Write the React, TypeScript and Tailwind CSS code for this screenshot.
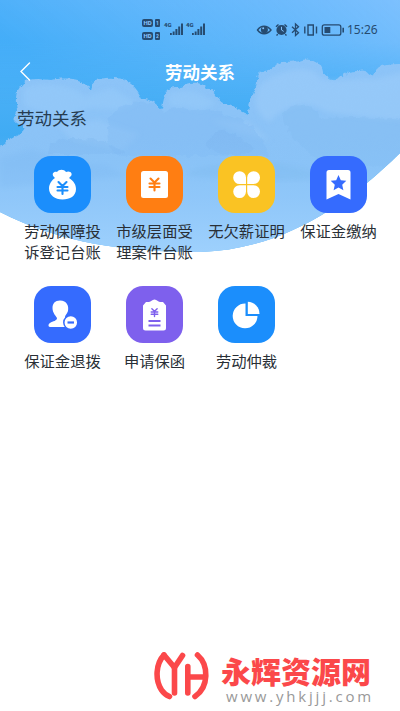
import type { ReactNode } from 'react';

const FONT = "font-['Noto_Sans_CJK_SC',sans-serif]";

function Sky() {
  return (
    <svg className="absolute left-0 top-0 h-[260px] w-[400px]" viewBox="0 0 400 260" aria-hidden="true">
      <defs>
        <linearGradient id="sky" x1="0" y1="0" x2="0" y2="1">
          <stop offset="0" stopColor="#61b7fc" />
          <stop offset="0.3" stopColor="#4db1f7" />
          <stop offset="0.6" stopColor="#3ba9f2" />
          <stop offset="1" stopColor="#53b4f7" />
        </linearGradient>
        <linearGradient id="glow" x1="0" y1="0.3" x2="1" y2="0">
          <stop offset="0" stopColor="#2fa6f7" stopOpacity="0.6" />
          <stop offset="0.45" stopColor="#66b8fc" stopOpacity="0.5" />
          <stop offset="1" stopColor="#8ac5ff" stopOpacity="0.9" />
        </linearGradient>
        <linearGradient id="fade" x1="0" y1="0" x2="0" y2="1">
          <stop offset="0" stopColor="white" />
          <stop offset="0.4" stopColor="white" />
          <stop offset="1" stopColor="black" />
        </linearGradient>
        <mask id="glowFade">
          <rect width="400" height="105" fill="url(#fade)" />
        </mask>
        <linearGradient id="cloud" x1="0" y1="0" x2="0" y2="1">
          <stop offset="0" stopColor="#8dc4f8" />
          <stop offset="0.5" stopColor="#8ac2f6" />
          <stop offset="1" stopColor="#9dcffb" />
        </linearGradient>
        <linearGradient id="haze" x1="0" y1="0" x2="0" y2="1">
          <stop offset="0" stopColor="#86c3f8" stopOpacity="0" />
          <stop offset="0.5" stopColor="#8fc7fa" stopOpacity="0.7" />
          <stop offset="1" stopColor="#a0d2fd" />
        </linearGradient>
        <clipPath id="bowl">
          <path d="M0 0H400V153C340 212 275 250 200 252C125 252 60 243 0 212Z" />
        </clipPath>
        <filter id="soft" x="-10%" y="-10%" width="120%" height="120%" colorInterpolationFilters="sRGB">
          <feGaussianBlur stdDeviation="2.5" />
        </filter>
        <filter id="ragged" colorInterpolationFilters="sRGB">
          <feTurbulence type="fractalNoise" baseFrequency="0.14" numOctaves="3" seed="4" />
          <feDisplacementMap in="SourceGraphic" scale="6" xChannelSelector="R" yChannelSelector="G" />
          <feGaussianBlur stdDeviation="0.4" />
        </filter>
      </defs>
      <g clipPath="url(#bowl)">
        <rect width="400" height="260" fill="url(#sky)" />
        <rect width="400" height="105" fill="url(#glow)" opacity="0.75" mask="url(#glowFade)" />
        <g filter="url(#ragged)">
          <path fill="url(#cloud)" d="M-10 156C2 144 8 140 20 134C25 131 27 127 24 126C16 124 12 122 14 116C20 113 15 107 16 100C16 91 19 88 24 82C34 77 44 80 52 80C64 77 80 79 84 83C88 84 88 89 90 90C91 80 104 77 112 78C127 77 137 87 142 99C151 98 158 106 162 109C164 93 168 87 178 88C187 81 202 81 208 88C218 93 218 101 223 103C235 104 240 112 248 114C249 98 255 94 257 82C256 71 268 72 274 67C281 59 290 63 299 61C310 57 322 62 323 72C331 77 326 81 338 80C342 76 346 71 358 71C369 68 369 77 373 74C378 64 389 64 410 64V270H-10Z" />
        </g>
        <g filter="url(#soft)">
          <path fill="#a3d0fb" opacity="0.42" d="M259 86C275 70 314 62 320 78C330 83 350 78 374 79L405 72V120C370 119 350 115 326 112C304 97 281 108 270 122C255 115 253 99 259 86Z" />
          <path fill="#a0cffb" opacity="0.32" d="M24 88C40 81 75 84 84 96L112 88L137 103L121 110L91 108L60 118L24 106ZM168 94C179 90 195 88 208 98L217 104L202 110L170 106Z" />
          <path fill="#9dcdfb" opacity="0.4" d="M58 126L98 120L140 134L122 151L73 141ZM210 120L248 121L271 141L237 132Z" />
        </g>
        <g filter="url(#ragged)">
          <path fill="#7db9f2" opacity="0.32" d="M107 128C109 108 126 101 142 103C154 102 158 107 164 112C180 103 190 112 201 110C218 107 224 114 232 118C242 114 252 127 262 140L270 156H120C107 151 108 139 107 128Z" />
          <path fill="#74b1ec" opacity="0.24" d="M205 145C213 127 230 128 238 137L254 148C238 159 220 156 205 145ZM50 145C64 135 79 141 94 139C108 143 118 145 125 154H48Z" />
          <path fill="#7bb7ef" opacity="0.22" d="M282 118C285 101 312 99 322 118L356 117L410 120V166H323C308 148 289 140 282 118Z" />
        </g>
        <path fill="url(#haze)" d="M0 135H400V260H0Z" />
        <path filter="url(#soft)" fill="#76b5e9" opacity="0.25" d="M185 175C205 161 235 166 260 162C282 163 300 169 322 173L310 179C270 182 220 180 185 175Z" />
        <path filter="url(#soft)" fill="#6faeed" opacity="0.16" d="M0 158L32 149L67 162L105 165L128 176L0 188Z" />
      </g>
    </svg>
  );
}

function Signal() {
  return (
    <span className="relative block h-4 w-[22px]">
      <span className="absolute left-0 top-0 font-['Roboto',sans-serif] text-[6px] font-black leading-[7px]">4G</span>
      <svg className="absolute bottom-0 left-[6px]" width="14" height="15" viewBox="0 0 14 15">
        <path fill="currentColor" d="M0 11h1.8v2H0zM2.7 9.5h1.9V13H2.7zM5.4 7h2v6h-2zM8.2 4.5h2V13h-2zM11 1.5h2V13h-2z" />
      </svg>
    </span>
  );
}

function HdTag({ sim }: { sim: string }) {
  return (
    <span className="flex h-2 gap-[2px]">
      <span className="flex w-[11px] items-center justify-center rounded-[2px] bg-[#264b70] font-['Roboto',sans-serif] text-[6px] font-bold leading-none text-[#8bc6fd]">HD</span>
      <span className="flex w-[5px] items-center justify-center rounded-[1px] bg-[#264b70] font-['Roboto',sans-serif] text-[5px] font-bold leading-none text-[#8bc6fd]">{sim}</span>
    </span>
  );
}

function StatusBar() {
  return (
    <div className="flex h-[48px] pl-[142px] pt-[19px] text-[#264b70]">
      <div className="flex w-[18px] flex-col gap-[5px]">
        <HdTag sim="1" />
        <HdTag sim="2" />
      </div>
      <div className="ml-[4px] mt-[2px] flex">
        <Signal />
        <Signal />
      </div>
      <svg className="ml-[46px] mt-[3px] shrink-0" width="91" height="16" viewBox="0 0 91 16" fill="none" stroke="currentColor" strokeWidth="1.4">
        <path d="M3.5 8C7 3 13 3 17 8C13 13 7 13 3.5 8Z" />
        <circle cx="10.4" cy="7.7" r="3.5" fill="currentColor" stroke="none" />
        <circle cx="9.2" cy="6.3" r="1" fill="#85c2fc" stroke="none" />
        <circle cx="27.5" cy="8" r="5.1" fill="currentColor" stroke="none" />
        <path d="M22 4.8L24.5 2.4M33 4.8L30.5 2.4M23.8 12.3L22.5 13.5M31.2 12.3L32.5 13.5" />
        <path stroke="#85c2fc" strokeWidth="1" d="M27.5 4.8V8L29.7 9.4" />
        <path strokeWidth="1.3" d="M38 4.7L44.5 10.8L41.5 13.5V2L44.5 4.7L38 10.8" />
        <path d="M54 3h5.3v10H54zM50.8 4.5v7M62.5 4.5v7" strokeWidth="1.4" />
        <rect x="68.3" y="2.9" width="18.5" height="10.3" rx="2" strokeWidth="1.3" />
        <rect x="70.5" y="5" width="5.8" height="6" fill="currentColor" stroke="none" />
        <path d="M89.2 5.7v4.7" strokeWidth="1.6" />
      </svg>
      <span className="ml-[2px] mt-[3px] text-[12px] leading-4 font-['Noto_Sans',sans-serif]">15:26</span>
    </div>
  );
}

function YenMark({ color }: { color: string }) {
  return <path d="M-4-5L0-1L4-5M-5 0H5M-5 3.5H5M0-1V7" fill="none" stroke={color} strokeWidth="2.1" strokeLinecap="round" />;
}

type Entry = { lines: string[]; tile: string; icon: ReactNode };

const entries: Entry[] = [
  {
    lines: ['劳动保障投', '诉登记台账'],
    tile: 'bg-[#1b8efc]',
    icon: (
      <>
        <path d="M20 21C17 18 20 15 23 16C25 13 30 13 32 16C36 14 40 18 36 21L35 22C40 25 42 29 42 33C42 40 36 43.5 28.5 43.5C21 43.5 15 39 15 32.5C15 28 18 24 21 22Z" />
        <g transform="translate(28.5 31)"><YenMark color="#1b8efc" /></g>
      </>
    ),
  },
  {
    lines: ['市级层面受', '理案件台账'],
    tile: 'bg-[#ff7e12]',
    icon: (
      <>
        <rect x="15" y="15" width="27" height="27" rx="2.5" />
        <g transform="translate(28.5 27.5)"><YenMark color="#ff7e12" /></g>
      </>
    ),
  },
  {
    lines: ['无欠薪证明'],
    tile: 'bg-[#fac323]',
    icon: (
      <>
        <path d="M28 28V21.5A6.4 6.4 0 1 0 21.6 28ZM29.2 28V21.5A6.4 6.4 0 1 1 35.6 28ZM28 29.2V35.6A6.4 6.4 0 1 1 21.6 29.2ZM29.2 29.2V35.6A6.4 6.4 0 1 0 35.6 29.2Z" />
      </>
    ),
  },
  {
    lines: ['保证金缴纳'],
    tile: 'bg-[#356bfe]',
    icon: (
      <>
        <path d="M19 14H38Q40.5 14 40.5 16.5V43.5L28.5 38L16.5 43.5V16.5Q16.5 14 19 14Z" />
        <path fill="#356bfe" d="M28.5 19L30.8 24.2L36.3 24.8L32.2 28.7L33.4 34.3L28.5 31.5L23.6 34.3L24.8 28.7L20.7 24.8L26.2 24.2Z" />
      </>
    ),
  },
  {
    lines: ['保证金退拨'],
    tile: 'bg-[#356bfe]',
    icon: (
      <>
        <path d="M26 14.5C33 14.5 35 20 34 25C33 28 31 29.5 31 31C31 33 34 34 36 35L38 41H16C14 41 14 38 16 37C19 35 23 35 23 32C22 30 18.5 27 18.5 22C18.5 17.5 21 14.5 26 14.5Z" />
        <circle cx="36.8" cy="36.5" r="7" stroke="#356bfe" strokeWidth="1.5" />
        <path d="M33.5 36.5H40" stroke="#356bfe" strokeWidth="2.2" />
      </>
    ),
  },
  {
    lines: ['申请保函'],
    tile: 'bg-[#7e60ed]',
    icon: (
      <>
        <path d="M20 16H23C25 16 26 13.5 28.5 13.5C31 13.5 32 16 34 16H37L40 19.5V42Q40 44.5 37.5 44.5H19.5Q17 44.5 17 42V19.5Z" />
        <g transform="translate(28.5 26) scale(.66)"><YenMark color="#7e60ed" /></g>
        <path d="M22.5 35H34.5M22.5 39.5H34.5" stroke="#7e60ed" strokeWidth="1.9" />
      </>
    ),
  },
  {
    lines: ['劳动仲裁'],
    tile: 'bg-[#1b8efc]',
    icon: (
      <>
        <path d="M27.5 17.5A12.4 12.4 0 1 0 39.5 30H27.5Z" />
        <path d="M29.8 15.8A12 12 0 0 1 41.5 28H29.8Z" />
      </>
    ),
  },
];

function MenuItem({ lines, tile, icon }: Entry) {
  return (
    <div className="flex h-[130px] flex-col items-center">
      <div className={`h-[57px] w-[57px] shrink-0 rounded-[17px] ${tile}`}>
        <svg width="57" height="57" viewBox="0 0 57 57" fill="white">{icon}</svg>
      </div>
      <div className="mt-[7px] whitespace-nowrap text-center text-[15.3px] leading-[20.5px] text-[#292f36]">
        {lines.map((line) => <div key={line}>{line}</div>)}
      </div>
    </div>
  );
}

function Brand() {
  return (
    <div className="absolute left-[154px] top-[649px] flex h-[60px] w-[230px]">
      <svg className="shrink-0" width="58" height="54" viewBox="0 0 58 54" fill="none" stroke="#fb484a" strokeWidth="5.6" strokeLinecap="round" strokeLinejoin="round">
        <path d="M10 6C1.5 15 1 31 7.5 41C9.5 44 12 46 15.5 47.5" />
        <path d="M10 6L20.5 18.5V44" />
        <path d="M28.5 6.5L20.5 18.5" />
        <path d="M33.8 17.5V44M33.8 28H51" />
        <path d="M43.5 6C55 16 55 38 41 47.5" />
      </svg>
      <div className="ml-[9px] flex flex-col">
        <div className="mt-[4px] h-[34px] whitespace-nowrap text-[30px] font-black leading-[34px] text-[#fb484a]">永辉资源网</div>
        <div className="ml-[5px] mt-[2px] whitespace-nowrap font-['Open_Sans',sans-serif] text-[15px] leading-[15px] tracking-[2.8px] text-[#999]">www.yhkjjj.com</div>
      </div>
    </div>
  );
}

export default function App() {
  return (
    <main className={`relative h-[711px] w-[400px] overflow-hidden bg-white ${FONT}`}>
      <Sky />
      <div className="relative">
        <StatusBar />
        <header className="grid h-[48px] grid-cols-[66px_1fr_66px] items-center">
          <svg className="ml-[18px]" width="16" height="20" viewBox="0 0 16 20" fill="none" stroke="white" strokeWidth="1.4" strokeLinecap="round">
            <path d="M11.5 1L3 9.5L11.5 18" />
          </svg>
          <h1 className="text-center text-[17.5px] font-bold text-white">劳动关系</h1>
        </header>
        <h2 className="ml-[17px] mt-[9px] text-[17.5px] leading-[26px] text-[#263c50]">劳动关系</h2>
        <div className="ml-[16.5px] mt-[25px] grid grid-cols-[repeat(4,92px)]">
          {entries.map((entry) => <MenuItem key={entry.lines[0]} {...entry} />)}
        </div>
      </div>
      <Brand />
    </main>
  );
}
